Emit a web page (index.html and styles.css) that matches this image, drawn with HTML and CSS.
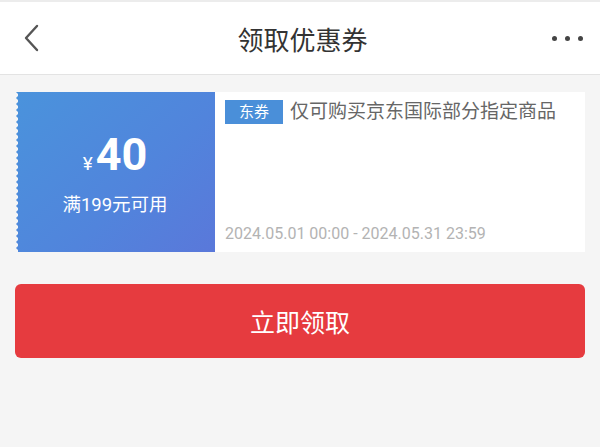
FILE: index.html
```html
<!DOCTYPE html>
<html lang="zh-CN">
<head>
    <meta charset="UTF-8">
    <meta name="viewport" content="width=device-width, initial-scale=1.0">
    <title>领取优惠券</title>
    <link rel="stylesheet" href="styles.css">
</head>
<body>
    <header class="topbar">
        <a class="back" href="#">
            <svg width="20" height="30" viewBox="0 0 20 30">
                <polyline points="15,3 4,15 15,27" fill="none" stroke="#555" stroke-width="2.4" stroke-linecap="round" stroke-linejoin="round"/>
            </svg>
        </a>
        <h1>领取优惠券</h1>
        <a class="more" href="#">
            <span></span><span></span><span></span>
        </a>
    </header>

    <main class="page">
        <div class="coupon">
            <div class="coupon-left">
                <div class="price"><span class="yen">¥</span>40</div>
                <div class="limit">满199元可用</div>
            </div>
            <div class="coupon-right">
                <p class="desc"><span class="tag">东券</span>仅可购买京东国际部分指定商品</p>
                <p class="date">2024.05.01 00:00 - 2024.05.31 23:59</p>
            </div>
        </div>

        <button class="get-btn">立即领取</button>
    </main>
</body>
</html>
```

FILE: styles.css
```css
body {
    margin: 0;
    padding: 0;
    background-color: #f5f5f5;
    font-family: Roboto, "Noto Sans CJK SC", sans-serif;
    height: 447px;
}

.topbar {
    display: flex;
    align-items: center;
    justify-content: space-between;
    height: 72px;
    padding: 0 17px 0 22px;
    background-color: #fff;
    border-top: 2px solid #ececec;
    border-bottom: 1px solid #e3e3e3;
}

.topbar h1 {
    margin: 0;
    font-size: 26px;
    font-weight: normal;
    color: #333;
}

.back {
    display: flex;
    width: 40px;
}

.more {
    display: flex;
    gap: 8px;
    width: 40px;
    justify-content: flex-end;
}

.more span {
    width: 5px;
    height: 5px;
    border-radius: 50%;
    background-color: #444;
}

.page {
    padding: 17px 15px 0;
}

.coupon {
    display: flex;
    height: 160px;
}

/* left edge: little half-circle bites cut out of the stub */
.coupon-left {
    width: 200px;
    display: flex;
    flex-direction: column;
    align-items: center;
    justify-content: center;
    color: #fff;
    background:
        radial-gradient(circle at 0 3px, #f5f5f5 2.6px, transparent 3.2px) left top / 6px 6px repeat-y,
        linear-gradient(135deg, #4a93dc 0%, #5184dc 60%, #5a78da 100%);
}

.price {
    font-size: 45px;
    font-weight: bold;
    line-height: 1;
    margin-top: 4px;
}

.yen {
    font-size: 19px;
    font-weight: normal;
    margin-right: 3px;
}

.limit {
    font-size: 18.5px;
    margin-top: 13px;
}

.coupon-right {
    flex: 1;
    background-color: #fff;
    padding: 8px 10px 9px;
    display: flex;
    flex-direction: column;
    justify-content: space-between;
}

.desc {
    margin: 0;
    font-size: 19px;
    color: #666;
    line-height: 24px;
}

.tag {
    display: inline-block;
    background-color: #4a8fd9;
    color: #fff;
    font-size: 15px;
    padding: 0 14px;
    margin-right: 7px;
    vertical-align: top;
}

.date {
    margin: 0;
    font-size: 16px;
    color: #b3b3b3;
}

.get-btn {
    display: block;
    width: 100%;
    height: 74px;
    margin-top: 32px;
    background-color: #e63b3f;
    color: #fff;
    font-family: "Noto Sans CJK SC", sans-serif;
    font-size: 25px;
    border: none;
    border-radius: 6px;
    cursor: pointer;
}
```
